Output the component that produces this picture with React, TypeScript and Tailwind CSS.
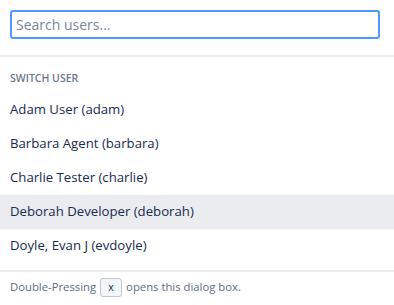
import React from "react";

const users = [
    "Adam User (adam)",
    "Barbara Agent (barbara)",
    "Charlie Tester (charlie)",
    "Deborah Developer (deborah)",
    "Doyle, Evan J (evdoyle)",
];

const App = () => {
    return (
        <div className="w-[394px] h-[305px] bg-white text-[#172b4d] font-['Open_Sans','Noto_Sans',sans-serif] overflow-hidden">
            <div className="px-[10px] pt-[10px] pb-[16px]">
                <input
                    placeholder="Search users..."
                    className="w-[370px] h-[29px] rounded-[3px] border-2 border-[#4c9aff] px-[4px] text-[14px] outline-none placeholder:text-[#7a869a]"
                />
            </div>
            <div className="border-t-2 border-[#ebecf0]">
                <div className="px-[10px] pt-[14px] pb-[8px] text-[10.5px] font-semibold uppercase text-[#6b778c] leading-[14px]">
                    Switch user
                </div>
                <ul>
                    {users.map((u, i) => (
                        <li
                            key={u}
                            className={`h-[34px] flex items-center px-[10px] text-[13.2px] ${i === 3 ? "bg-[#ebecf0]" : ""}`}
                        >
                            {u}
                        </li>
                    ))}
                </ul>
            </div>
            <div className="mt-[7px] border-t-2 border-[#ebecf0] px-[10px] h-[33px] flex items-center text-[11.3px] text-[#5e6c84]">
                Double-Pressing
                <span className="mx-[4px] inline-flex items-center justify-center w-[22px] h-[19px] border border-[#c1c7d0] rounded-[3px] bg-[#f4f5f7] text-[#172b4d] text-[10.5px] leading-none pb-[1px]">
                    x
                </span>
                opens this dialog box.
            </div>
        </div>
    );
};

export default App;
